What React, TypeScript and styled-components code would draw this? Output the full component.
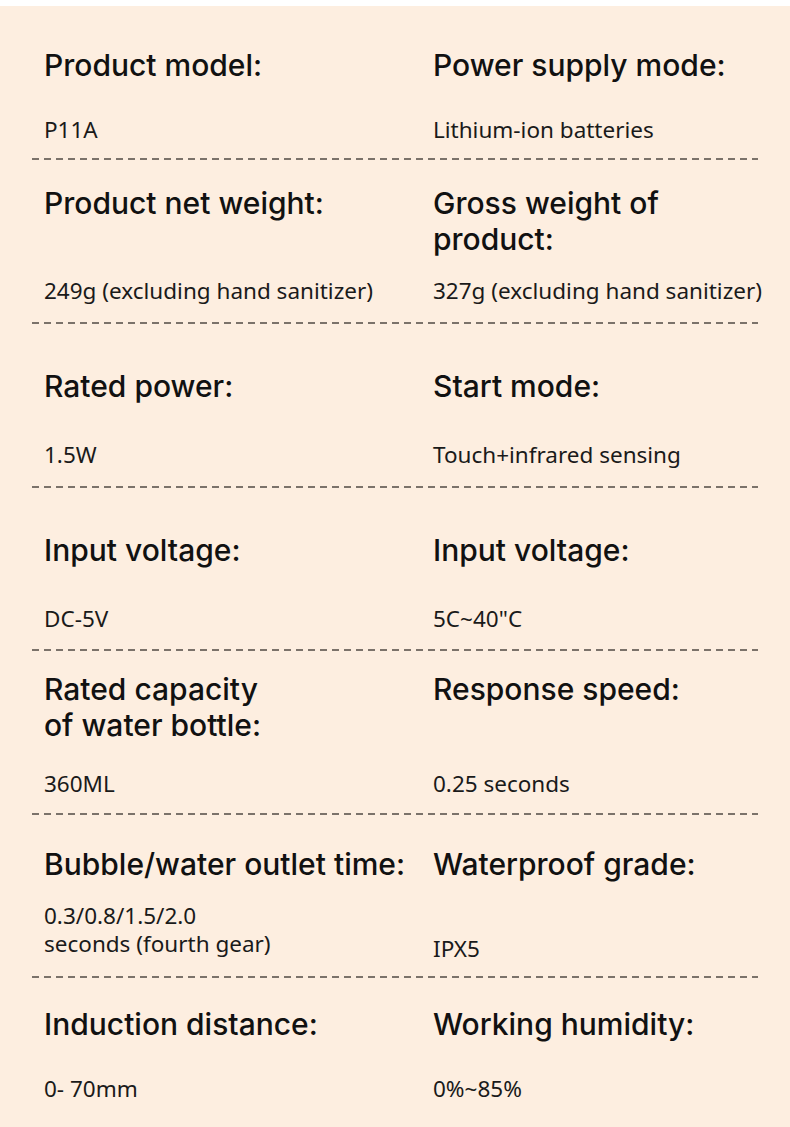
import React from "react";
import styled, { createGlobalStyle } from "styled-components";

const Global = createGlobalStyle`
  html, body { margin: 0; padding: 0; background: #ffffff; }
  body { width: 790px; }
`;

const Page = styled.main`
  margin-top: 6px;
  background: #fdeee0;
  min-height: 1121px;
  display: flex;
  flex-direction: column;
  color: #111;
`;

const Section = styled.section<{ $pt: number; $pb: number }>`
  padding-top: ${(p) => p.$pt}px;
  display: flex;
  flex-direction: column;
  gap: ${(p) => p.$pb}px;
`;

const Grid = styled.div<{ $h: number }>`
  display: grid;
  grid-template-columns: 389px 1fr;
  padding-left: 44px;
  min-height: ${(p) => p.$h}px;
`;

const Cell = styled.div<{ $shift?: number }>`
  display: flex;
  flex-direction: column;
  justify-content: space-between;
  padding-bottom: ${(p) => p.$shift ?? 0}px;
`;

const Label = styled.h3`
  margin: 0;
  font-family: Inter, "Liberation Sans", sans-serif;
  font-weight: 500;
  font-size: 30px;
  line-height: 36px;
  white-space: nowrap;
  color: #111;
`;

const Value = styled.p`
  margin: 0;
  font-family: "Noto Sans", "Open Sans", sans-serif;
  font-size: 22.5px;
  line-height: 28px;
  white-space: nowrap;
  color: #1a1a1a;
`;

const Divider = styled.div`
  margin-left: 32px;
  width: 726px;
  height: 2px;
  background: repeating-linear-gradient(
    to right,
    #7b726a 0 7px,
    transparent 7px 12px
  );
`;

type Item = { label: React.ReactNode; value: React.ReactNode; shift?: number };
type RowData = { pt: number; pb: number; h: number; items: [Item, Item]; divider: boolean };

const rows: RowData[] = [
  {
    pt: 41, pb: 14, h: 97, divider: true,
    items: [
      { label: "Product model:", value: "P11A" },
      { label: "Power supply mode:", value: "Lithium-ion batteries" },
    ],
  },
  {
    pt: 25, pb: 17, h: 120, divider: true,
    items: [
      { label: "Product net weight:", value: "249g (excluding hand sanitizer)" },
      { label: <>Gross weight of<br />product:</>, value: "327g (excluding hand sanitizer)" },
    ],
  },
  {
    pt: 44, pb: 17, h: 101, divider: true,
    items: [
      { label: "Rated power:", value: "1.5W" },
      { label: "Start mode:", value: "Touch+infrared sensing" },
    ],
  },
  {
    pt: 44, pb: 16, h: 101, divider: true,
    items: [
      { label: "Input voltage:", value: "DC-5V" },
      { label: "Input voltage:", value: "5C~40\"C" },
    ],
  },
  {
    pt: 20, pb: 15, h: 127, divider: true,
    items: [
      { label: <>Rated capacity<br />of water bottle:</>, value: "360ML" },
      { label: "Response speed:", value: "0.25 seconds" },
    ],
  },
  {
    pt: 31, pb: 13, h: 117, divider: true,
    items: [
      { label: "Bubble/water outlet time:", value: <>0.3/0.8/1.5/2.0<br />seconds (fourth gear)</>, shift: 5 },
      { label: "Waterproof grade:", value: "IPX5" },
    ],
  },
  {
    pt: 28, pb: 0, h: 97, divider: false,
    items: [
      { label: "Induction distance:", value: "0- 70mm" },
      { label: "Working humidity:", value: "0%~85%" },
    ],
  },
];

export default function App() {
  return (
    <>
      <Global />
      <Page>
        {rows.map((r, i) => (
          <Section key={i} $pt={r.pt} $pb={r.pb}>
            <Grid $h={r.h}>
              {r.items.map((it, j) => (
                <Cell key={j} $shift={it.shift}>
                  <Label>{it.label}</Label>
                  <Value>{it.value}</Value>
                </Cell>
              ))}
            </Grid>
            {r.divider && <Divider />}
          </Section>
        ))}
      </Page>
    </>
  );
}
